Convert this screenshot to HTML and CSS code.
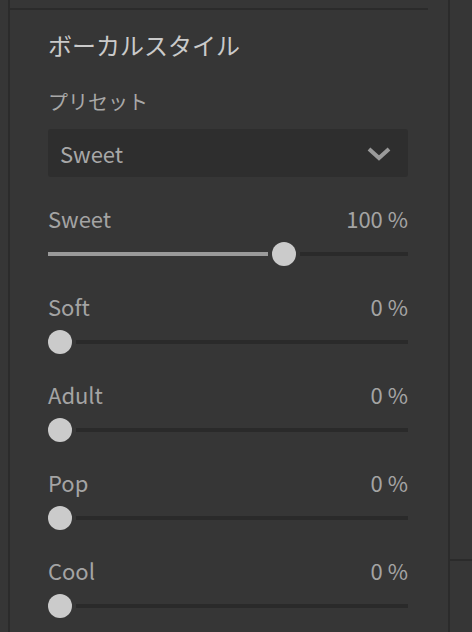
FILE: index.html
```html
<!DOCTYPE html>
<html lang="ja">
<head>
<meta charset="utf-8">
<link rel="stylesheet" href="styles.css">
</head>
<body>
<div class="app">
  <div class="gutter"></div>
  <section class="panel">
    <div class="top-rule"></div>
    <div class="content">
      <h1 class="title">ボーカルスタイル</h1>
      <div class="field-label">プリセット</div>
      <div class="select">
        <span class="select-value">Sweet</span>
        <svg class="chevron" width="24" height="16" viewBox="0 0 24 16"><polyline points="2,3 12,12 22,3" fill="none" stroke="#9a9a9a" stroke-width="4"/></svg>
      </div>
      <div class="row">
        <div class="row-head"><span>Sweet</span><span>100 %</span></div>
        <div class="slider"><div class="fill" style="width:220px"></div><div class="thumb"></div><div class="rest"></div></div>
      </div>
      <div class="row">
        <div class="row-head"><span>Soft</span><span>0 %</span></div>
        <div class="slider"><div class="thumb"></div><div class="rest"></div></div>
      </div>
      <div class="row">
        <div class="row-head"><span>Adult</span><span>0 %</span></div>
        <div class="slider"><div class="thumb"></div><div class="rest"></div></div>
      </div>
      <div class="row">
        <div class="row-head"><span>Pop</span><span>0 %</span></div>
        <div class="slider"><div class="thumb"></div><div class="rest"></div></div>
      </div>
      <div class="row">
        <div class="row-head"><span>Cool</span><span>0 %</span></div>
        <div class="slider"><div class="thumb"></div><div class="rest"></div></div>
      </div>
    </div>
  </section>
  <div class="side">
    <div class="side-block"></div>
  </div>
</div>
</body>
</html>
```
FILE: styles.css
```css
html, body {
  margin: 0;
  padding: 0;
  background: #363636;
  height: 100%;
  overflow: hidden;
}
body {
  font-family: "Noto Sans CJK JP", "Noto Sans", sans-serif;
  color: #a8a8a8;
}
.app {
  display: flex;
  height: 632px;
}
.gutter {
  width: 8px;
  flex: none;
}
.panel {
  width: 438px;
  flex: none;
  border-left: 2px solid #2b2b2b;
  border-right: 2px solid #2b2b2b;
}
.top-rule {
  height: 2px;
  margin-top: 8px;
  margin-right: 20px;
  background: #2b2b2b;
}
.content {
  padding: 0 40px 0 38px;
}
.title {
  margin: 0;
  padding-top: 19px;
  font-size: 24px;
  font-weight: normal;
  line-height: 32px;
  color: #cacaca;
}
.field-label {
  margin-top: 27px;
  font-size: 20px;
  line-height: 28px;
  color: #a8a8a8;
}
.select {
  margin-top: 13px;
  height: 48px;
  background: #2e2e2e;
  border-radius: 3px;
  display: flex;
  align-items: center;
  justify-content: space-between;
  padding: 0 17px 0 12px;
}
.select-value {
  font-size: 22px;
  color: #a8a8a8;
}
.chevron {
  display: block;
  margin-top: 2px;
}
.row {
  margin-top: 27px;
}
.row + .row {
  margin-top: 26px;
}
.row-head {
  display: flex;
  justify-content: space-between;
  font-size: 22px;
  line-height: 28px;
  color: #a4a4a4;
}
.slider {
  margin-top: 10px;
  height: 24px;
  display: flex;
  align-items: center;
}
.fill {
  height: 4px;
  background: #9a9a9a;
  margin-right: 4px;
}
.thumb {
  width: 24px;
  height: 24px;
  border-radius: 50%;
  background: #cbcbcb;
  flex: none;
}
.rest {
  flex: 1;
  height: 4px;
  margin-left: 4px;
  background: #2a2a2a;
}
.side {
  flex: 1;
}
.side-block {
  height: 561px;
  border-bottom: 2px solid #2b2b2b;
  box-sizing: border-box;
}
```
